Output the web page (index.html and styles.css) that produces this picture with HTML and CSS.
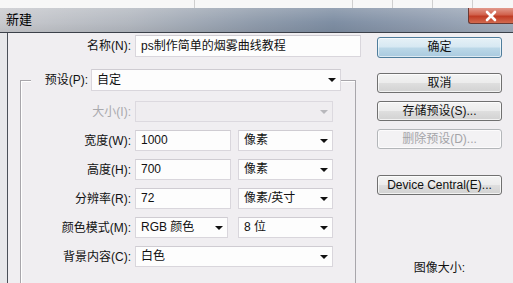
FILE: index.html
```html
<!DOCTYPE html>
<html>
<head>
<meta charset="utf-8">
<link rel="stylesheet" href="styles.css">
</head>
<body>
<div class="window">
  <div class="strip">
    <span class="s1"></span><span class="s2"></span><span class="s3"></span><span class="s3"></span><span class="s3"></span>
  </div>
  <div class="titlebar">
    <span class="title">新建</span>
    <span class="close">
      <svg width="14" height="12" viewBox="0 0 14 12"><path d="M3 2 L11 10 M11 2 L3 10" stroke="#fff" stroke-width="2.6" stroke-linecap="round"/></svg>
    </span>
  </div>
  <div class="frame">
    <div class="dialog">
      <div class="left">
        <div class="row">
          <label class="lbl name-lbl">名称(N):</label>
          <div class="field name-input">ps制作简单的烟雾曲线教程</div>
        </div>
        <div class="group">
          <div class="row preset-row">
            <label class="plabel">预设(P):</label>
            <div class="field dd preset">自定</div>
          </div>
          <div class="row grow first">
            <label class="lbl glbl disabled">大小(I):</label>
            <div class="field dd w-full off"></div>
          </div>
          <div class="row grow">
            <label class="lbl glbl">宽度(W):</label>
            <div class="field w-num">1000</div>
            <div class="field dd w-unit">像素</div>
          </div>
          <div class="row grow">
            <label class="lbl glbl">高度(H):</label>
            <div class="field w-num">700</div>
            <div class="field dd w-unit">像素</div>
          </div>
          <div class="row grow">
            <label class="lbl glbl">分辨率(R):</label>
            <div class="field w-num">72</div>
            <div class="field dd w-unit">像素/英寸</div>
          </div>
          <div class="row grow">
            <label class="lbl glbl">颜色模式(M):</label>
            <div class="field dd w-mode">RGB 颜色</div>
            <div class="field dd w-unit">8 位</div>
          </div>
          <div class="row grow">
            <label class="lbl glbl">背景内容(C):</label>
            <div class="field dd w-full">白色</div>
          </div>
        </div>
      </div>
      <div class="right">
        <div class="btn primary">确定</div>
        <div class="btn cancel">取消</div>
        <div class="btn gap8">存储预设(S)...</div>
        <div class="btn gap8 disabled-btn">删除预设(D)...</div>
        <div class="btn device">Device Central(E)...</div>
        <div class="imgsize">图像大小:</div>
      </div>
    </div>
  </div>
</div>
</body>
</html>
```
FILE: styles.css
```css
* { box-sizing: border-box; }
html, body { margin: 0; padding: 0; }
body {
  width: 513px;
  height: 283px;
  overflow: hidden;
  background: #f0eef1;
  font-family: "Liberation Sans", "Noto Sans CJK SC", sans-serif;
  font-size: 12px;
  color: #111;
}
.window { width: 513px; height: 283px; overflow: hidden; }

.strip { display: flex; height: 8px; background: #f7f7f7; }
.strip span { border-right: 1px solid #cfcfcf; height: 8px; }
.s1 { width: 195px; }
.s2 { width: 158px; }
.s3 { width: 40px; }

.titlebar {
  height: 25px;
  display: flex;
  justify-content: space-between;
  align-items: flex-start;
  background:
    linear-gradient(180deg, rgba(255,255,255,0.18) 0%, rgba(255,255,255,0) 60%, rgba(0,0,0,0.06) 100%),
    linear-gradient(90deg, #c9cace 0%, #b3b8c0 25%, #8f9bab 50%, #7e8ea3 65%, #8d9aad 80%, #a3aebd 100%);
  border-bottom: 1px solid #3b4049;
}
.title {
  padding-left: 6px;
  line-height: 24px;
  font-size: 13px;
  color: #000;
}
.close {
  width: 45px;
  height: 16px;
  display: flex;
  align-items: center;
  justify-content: center;
  background: linear-gradient(180deg, #e29a8c 0%, #d1614c 45%, #c03b24 55%, #d36a4f 100%);
  border-left: 1px solid #6a3a34;
  border-bottom: 1px solid #6a3a34;
  border-bottom-left-radius: 3px;
}

.frame {
  display: flex;
  padding-left: 7px;
  background: #e7e7ea;
  height: 250px;
}
.dialog {
  flex: 1;
  display: flex;
  background: #f0eef1;
  border-left: 1px solid #4a4f58;
}

.left { width: 353px; padding-top: 2px; }
.row { display: flex; align-items: center; height: 22px; }
.lbl { text-align: right; padding-right: 4px; color: #111; line-height: 22px; }
.name-lbl { width: 127px; }
.glbl { width: 114px; }
.disabled { color: #a9a9ad; }

.field {
  position: relative;
  height: 22px;
  line-height: 20px;
  padding-left: 5px;
  background: #fdfdfd;
  border: 1px solid #d9d6dc;
  border-top-color: #cfccd2;
  white-space: nowrap;
}
.dd::after {
  content: "";
  position: absolute;
  right: 4px;
  top: 8px;
  border-left: 4px solid transparent;
  border-right: 4px solid transparent;
  border-top: 4px solid #111;
}
.off { background: #efedf0; border-color: #dcd9df; }
.off::after { border-top-color: #b8b8bc; }

.name-input { width: 226px; }

.group {
  margin: 23px 0 0 12px;
  width: 336px;
  height: 220px;
  border: 1px solid #a8a6ab;
  border-bottom: none;
  box-shadow: inset 1px 1px 0 #ffffff;
}
.preset-row { margin-top: -12px; }
.plabel {
  margin-left: 10px;
  width: 60px;
  padding-right: 3px;
  text-align: right;
  background: #f0eef1;
  line-height: 22px;
}
.preset { width: 250px; }

.grow { height: 21px; margin-top: 8px; }
.grow.first { margin-top: 10px; }
.grow .field { height: 21px; line-height: 19px; }
.grow .dd::after { top: 8px; right: 4px; }
.w-full { width: 198px; }
.w-num { width: 96px; }
.w-unit { width: 95px; margin-left: 7px; }
.w-mode { width: 93px; }
.w-mode + .w-unit { margin-left: 10px; }

.right {
  margin-left: 16px;
  width: 125px;
  padding-top: 4px;
  display: flex;
  flex-direction: column;
}
.btn {
  height: 20px;
  line-height: 18px;
  text-align: center;
  border: 1px solid #707070;
  border-radius: 3px;
  background: linear-gradient(180deg, #f4f4f4 0%, #ececec 48%, #dedede 52%, #d2d2d2 100%);
  box-shadow: inset 0 0 0 1px rgba(255,255,255,0.7);
  color: #111;
}
.primary {
  height: 21px;
  line-height: 19px;
  border-color: #4f7d9c;
  background: linear-gradient(180deg, #e6f1f7 0%, #d6e8f2 48%, #bcd8e8 52%, #a9cadf 100%);
  box-shadow: inset 0 0 0 1px rgba(255,255,255,0.6);
}
.cancel { margin-top: 15px; }
.gap8 { margin-top: 8px; }
.disabled-btn {
  color: #a4a4a8;
  border-color: #b3b6b9;
  background: #f3f2f4;
}
.device { margin-top: 26px; }
.imgsize {
  margin-top: 66px;
  text-align: center;
  line-height: 14px;
  color: #111;
}
```
